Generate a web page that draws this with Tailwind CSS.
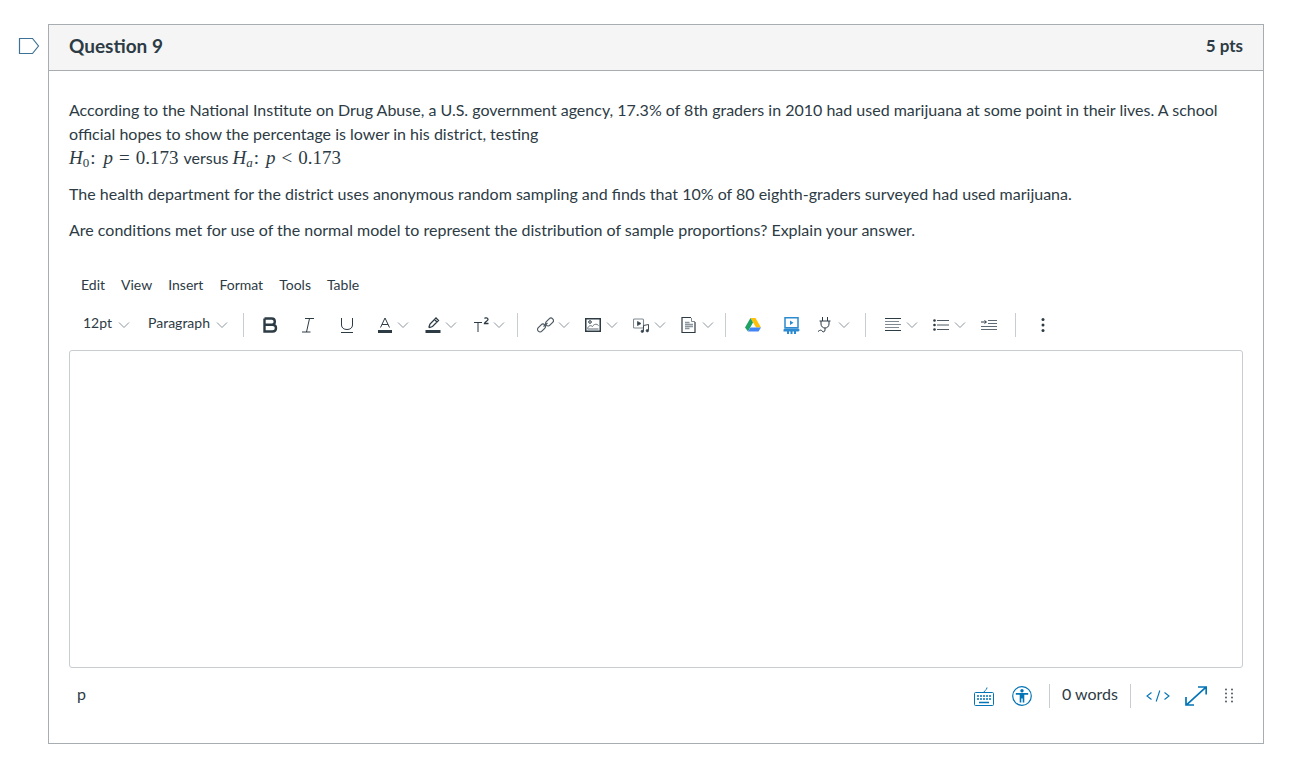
<!DOCTYPE html>
<html lang="en">
<head>
<meta charset="utf-8">
<title>Question 9</title>
<script src="https://cdn.jsdelivr.net/npm/@tailwindcss/browser@4"></script>
</head>
<body class="bg-white font-['Lato','Noto_Sans',sans-serif] text-[#2d3b45] overflow-hidden">
<div class="relative w-[1291px] h-[769px] pt-6 pl-12">
  <svg class="absolute left-[18px] top-[37px]" width="22" height="18" viewBox="0 0 22 18" fill="none"><path d="M1.5 1.5H14.5L20.5 9L14.5 16.5H1.5Z" stroke="#3f7295" stroke-width="1.2"/></svg>
  <section class="w-[1216px] h-[720px] border border-[#a8adb1] flex flex-col">
    <header class="h-[46px] shrink-0 bg-[#f5f5f5] border-b border-[#a8adb1] pl-5 pr-5 pb-[5px] flex items-center justify-between font-bold">
      <h2 class="text-[19px] leading-none">Question 9</h2>
      <span class="text-[17px] leading-none">5 pts</span>
    </header>
    <div class="px-5 pt-[27px] flex-1 flex flex-col">
      <div class="text-[16px] leading-6 flex flex-col gap-3">
        <p>According to the National Institute on Drug Abuse, a U.S. government agency, 17.3% of 8th graders in 2010 had used marijuana at some point in their lives. A school official hopes to show the percentage is lower in his district, testing<br><span class="font-['Liberation_Serif',serif] text-[19px] leading-none"><i>H</i><sub class="text-[13px]">0</sub><span class="ml-[1px]">:</span><i class="ml-[8px]">p</i><span class="mx-[6px]">=</span>0.173</span><span class="ml-[5px]">versus</span><span class="ml-[4px] font-['Liberation_Serif',serif] text-[19px] leading-none"><i>H</i><sub class="text-[13px]"><i>a</i></sub><span class="ml-[1px]">:</span><i class="ml-[7px]">p</i><span class="mx-[6px]">&lt;</span>0.173</span></p>
        <p>The health department for the district uses anonymous random sampling and finds that 10% of 80 eighth-graders surveyed had used marijuana.</p>
        <p>Are conditions met for use of the normal model to represent the distribution of sample proportions? Explain your answer.</p>
      </div>
      <nav class="mt-[34px] h-[18px] flex items-center text-[14px] leading-none pl-3 gap-4">
        <span>Edit</span><span>View</span><span>Insert</span><span>Format</span><span>Tools</span><span>Table</span>
      </nav>
      <div class="mt-[19px] h-6 flex items-center text-[14px] leading-none">
        <span class="ml-[14px] pb-1">12pt</span>
        <svg class="ml-[6px]" width="12" height="8" viewBox="0 0 12 8" fill="none" stroke="#8b969e"><path d="M1 1.5L6 6.5L11 1.5"/></svg>
        <span class="ml-[18px] pb-1">Paragraph</span>
        <svg class="ml-[6px]" width="12" height="8" viewBox="0 0 12 8" fill="none" stroke="#8b969e"><path d="M1 1.5L6 6.5L11 1.5"/></svg>
        <div class="ml-[15px] w-px h-6 bg-[#c7cdd1]"></div>
        <svg class="ml-[18px]" width="16" height="16" viewBox="0 0 16 16" fill="none" stroke="#2d3b45" stroke-width="2.400"><path d="M2.500 1.500V14.500H10.500C12.500 14.500 14 13 14 11C14 9 12.500 7.700 10.500 7.700H2.500M10 7.700C11.800 7.700 12.800 6.400 12.800 4.600C12.800 2.800 11.600 1.500 9.800 1.500H2.500"/></svg>
        <svg class="ml-[22px]" width="16" height="16" viewBox="0 0 16 16" fill="none" stroke="#2d3b45"><path d="M5 1.500H14M2 15H10.500M9.500 1.500L6.500 15"/></svg>
        <svg class="ml-[23px]" width="16" height="16" viewBox="0 0 16 16" fill="none" stroke="#2d3b45"><path d="M2.500 1V8C2.500 11 5 12.500 8 12.500C11 12.500 13.500 11 13.500 8V1M2 15.500H14"/></svg>
        <svg class="ml-[22px]" width="16" height="16" viewBox="0 0 16 16" fill="none"><path d="M3.500 10.500L8 1L12.500 10.500M5 7.500H11" stroke="#2d3b45"/><rect x="1" y="13" width="14" height="3" fill="#2d3b45"/></svg>
        <svg class="ml-[4px]" width="12" height="8" viewBox="0 0 12 8" fill="none" stroke="#8b969e"><path d="M1 1.5L6 6.5L11 1.5"/></svg>
        <svg class="ml-[16px]" width="16" height="16" viewBox="0 0 16 16" fill="none"><path d="M4 10L5 7L11 1L13.500 3.500L7.500 9.500L4.500 10.500ZM9.500 2.500L12 5" stroke="#2d3b45" stroke-width="1.300"/><rect x="0.500" y="13" width="15" height="3" fill="#2d3b45"/></svg>
        <svg class="ml-[4px]" width="12" height="8" viewBox="0 0 12 8" fill="none" stroke="#8b969e"><path d="M1 1.5L6 6.5L11 1.5"/></svg>
        <svg class="ml-[16px]" width="17" height="16" viewBox="0 0 17 16" fill="none" stroke="#2d3b45"><path d="M1 5.500H9M5 5.500V15"/><path d="M11.500 1.500C12 .5 15 .5 15 2.500C15 4 12 4.500 11.500 6.500H15.500" stroke-width="1.300"/></svg>
        <svg class="ml-[3px]" width="12" height="8" viewBox="0 0 12 8" fill="none" stroke="#8b969e"><path d="M1 1.5L6 6.5L11 1.5"/></svg>
        <div class="ml-[12px] w-px h-6 bg-[#c7cdd1]"></div>
        <svg class="ml-[19px]" width="17" height="16" viewBox="0 0 17 16" fill="none" stroke="#4d5a63" stroke-width="1.200"><rect x="8" y="2.500" width="9" height="5" rx="2.500" transform="rotate(-45 12.500 5)"/><rect x="0" y="8.500" width="9" height="5" rx="2.500" transform="rotate(-45 4.500 11)"/><path d="M6.500 9.500L10.500 6"/></svg>
        <svg class="ml-[4px]" width="12" height="8" viewBox="0 0 12 8" fill="none" stroke="#8b969e"><path d="M1 1.5L6 6.5L11 1.5"/></svg>
        <svg class="ml-[15px]" width="16" height="16" viewBox="0 0 16 16" fill="none" stroke="#2d3b45"><rect x="0.750" y="1.750" width="14.500" height="12.500" stroke-width="1.500"/><circle cx="5" cy="5" r="1.300"/><path d="M2.500 11.500C3.500 8.500 6 8 7.500 9.500C9 7 11.500 6.500 13.500 8.500M2.500 12H13.500" stroke="#5f6b74"/></svg>
        <svg class="ml-[5px]" width="12" height="8" viewBox="0 0 12 8" fill="none" stroke="#8b969e"><path d="M1 1.5L6 6.5L11 1.5"/></svg>
        <svg class="ml-[15px]" width="17" height="16" viewBox="0 0 17 16" fill="none" stroke="#4d5a63" stroke-width="0.900"><rect x="0.500" y="2" width="10" height="9" rx="1" stroke-width="1.100" stroke="#7f8a92"/><path d="M4.500 4.500V8.500L8 6.500Z" fill="#2d3b45"/><path d="M10.500 14.500V8.500L15.500 7.500V13.500" stroke="#2d3b45"/><circle cx="9.300" cy="14.300" r="1.200" fill="#2d3b45"/><circle cx="14.300" cy="13.700" r="1.200" fill="#2d3b45"/></svg>
        <svg class="ml-[4px]" width="12" height="8" viewBox="0 0 12 8" fill="none" stroke="#8b969e"><path d="M1 1.500L6 6.500L11 1.500"/></svg>
        <svg class="ml-[15px]" width="16" height="16" viewBox="0 0 16 16" fill="none"><path d="M14 5V15.500H1V.5H10" stroke="#2d3b45" stroke-width="1.200"/><path d="M10.500 1V4.500H14" stroke="#7f8a92"/><path d="M4 5.500H8.500M4 7.500H12M4 9.500H12M4 11.500H8.500" stroke="#8b969e" stroke-width="1.400"/></svg>
        <svg class="ml-[5px]" width="12" height="8" viewBox="0 0 12 8" fill="none" stroke="#8b969e"><path d="M1 1.500L6 6.500L11 1.500"/></svg>
        <div class="ml-[11px] w-px h-6 bg-[#c7cdd1]"></div>
        <svg class="ml-[19px]" width="16" height="14" viewBox="0 0 16 14"><path d="M5.500 0H10.500L16 9.500H11Z" fill="#ffc107"/><path d="M5.500 0L8 4.500L3 13.500L0 9.500Z" fill="#1ea362"/><path d="M3 13.500L5.500 9.500H16L13.500 13.500Z" fill="#4285f4"/></svg>
        <svg class="ml-[22px]" width="17" height="17" viewBox="0 0 17 17" fill="none"><rect x="2" y="0.750" width="13" height="10" fill="#fff" stroke="#2b8ad0" stroke-width="1.500"/><path d="M7 3.500V8L10.500 5.750Z" fill="#2b8ad0"/><path d="M0.500 13C0.500 12 1.500 11.500 2.500 11.500H14.500C15.500 11.500 16.500 12 16.500 13C16.500 14 15.500 14.500 14.500 14.500H0.500ZM4 13H6V17H4ZM7.500 13H9.500V17H7.500ZM11 13H13V17H11Z" fill="#2b8ad0"/></svg>
        <svg class="ml-[17px]" width="16" height="16" viewBox="0 0 16 16" fill="none" stroke="#2d3b45"><path d="M5.500 0V4M10.500 0V4M2.500 4H13.500M4 4V7C4 9.500 6 11 8 11C10 11 12 9.500 12 7V4M8 11V13C8 15 6 15.500 5 14C4.500 13 3.500 12.500 1 14.500"/></svg>
        <svg class="ml-[5px]" width="12" height="8" viewBox="0 0 12 8" fill="none" stroke="#8b969e"><path d="M1 1.500L6 6.500L11 1.500"/></svg>
        <div class="ml-[15px] w-px h-6 bg-[#c7cdd1]"></div>
        <svg class="ml-[19px]" width="16" height="16" viewBox="0 0 16 16" fill="none"><path d="M0 1.500H16M0 13.500H16" stroke="#2d3b45"/><path d="M0 4.500H14M0 7.500H16M0 10.500H14" stroke="#7f8a92"/></svg>
        <svg class="ml-[5px]" width="12" height="8" viewBox="0 0 12 8" fill="none" stroke="#8b969e"><path d="M1 1.500L6 6.500L11 1.500"/></svg>
        <svg class="ml-[15px]" width="16" height="16" viewBox="0 0 16 16" fill="none"><path d="M4 3.500H16M4 8H16M4 12.500H16" stroke="#4d5a63"/><circle cx="1.500" cy="3.500" r="1.300" fill="#2d3b45"/><circle cx="1.500" cy="8" r="1.300" fill="#2d3b45"/><circle cx="1.500" cy="12.500" r="1.300" fill="#2d3b45"/></svg>
        <svg class="ml-[5px]" width="12" height="8" viewBox="0 0 12 8" fill="none" stroke="#8b969e"><path d="M1 1.500L6 6.500L11 1.500"/></svg>
        <svg class="ml-[15px]" width="16" height="16" viewBox="0 0 16 16" fill="none"><path d="M0 5H5M3.500 3.500L5.500 5L3.500 6.500" stroke="#2d3b45"/><path d="M7 3.500H16M7 6.500H16M0 9.500H16M0 12.500H16" stroke="#5f6b74"/></svg>
        <div class="ml-[18px] w-px h-6 bg-[#c7cdd1]"></div>
        <svg class="ml-[19px]" width="16" height="16" viewBox="0 0 16 16" fill="#2d3b45"><circle cx="8" cy="2.500" r="1.500"/><circle cx="8" cy="8" r="1.500"/><circle cx="8" cy="13.500" r="1.500"/></svg>
      </div>
      <div class="mt-[13px] h-[318px] shrink-0 border border-[#c7cdd1] rounded-[3px] bg-white"></div>
      <div class="mt-4 h-6 flex items-center">
        <span class="ml-2 text-[16px] leading-none pb-[5px]">p</span>
        <svg class="ml-auto" width="20" height="19" viewBox="0 0 20 19" fill="none" stroke="#0374b5"><rect x="0.500" y="5.500" width="19" height="13" rx="1"/><path d="M10 5.500C10 3 13 3.500 13 .5"/><path d="M3 9H17M3 12H17" stroke-width="1.500" stroke-dasharray="2 1"/><path d="M5 15.500H15" stroke-width="1.500"/></svg>
        <svg class="ml-[18px]" width="20" height="20" viewBox="0 0 20 20" fill="none"><circle cx="10" cy="10" r="9.300" stroke="#0374b5" stroke-width="1.200"/><circle cx="10" cy="4.800" r="1.700" fill="#0374b5"/><path d="M3.800 7H16.200V8.800H12.300V16.500H10.700V12.500H9.300V16.500H7.700V8.800H3.800Z" fill="#0374b5"/></svg>
        <div class="ml-[17px] w-px h-6 bg-[#c7cdd1]"></div>
        <span class="ml-3 text-[16px] leading-none pb-[5px]">0 words</span>
        <div class="ml-3 w-px h-6 bg-[#c7cdd1]"></div>
        <svg class="ml-[15px]" width="24" height="12" viewBox="0 0 24 12" fill="none" stroke="#0374b5" stroke-width="1.100"><path d="M5.500 2.500L1 6L5.500 9.500M18.500 2.500L23 6L18.500 9.500M13.800 .5L10.200 11.500"/></svg>
        <svg class="ml-[15px]" width="22" height="20" viewBox="0 0 22 20" fill="none" stroke="#0374b5" stroke-width="1.700"><path d="M13 1H21.200V8.500M21 1.200L1.500 18.800M1 11V19H9"/></svg>
        <svg class="ml-[18px] mr-[10px]" width="8" height="16" viewBox="0 0 8 16" fill="#4d5a63"><circle cx="1" cy="1.500" r="1"/><circle cx="7" cy="1.500" r="1"/><circle cx="1" cy="5.500" r="1"/><circle cx="7" cy="5.500" r="1"/><circle cx="1" cy="9.500" r="1"/><circle cx="7" cy="9.500" r="1"/><circle cx="1" cy="13.500" r="1"/><circle cx="7" cy="13.500" r="1"/></svg>
      </div>
    </div>
  </section>
</div>
</body>
</html>
